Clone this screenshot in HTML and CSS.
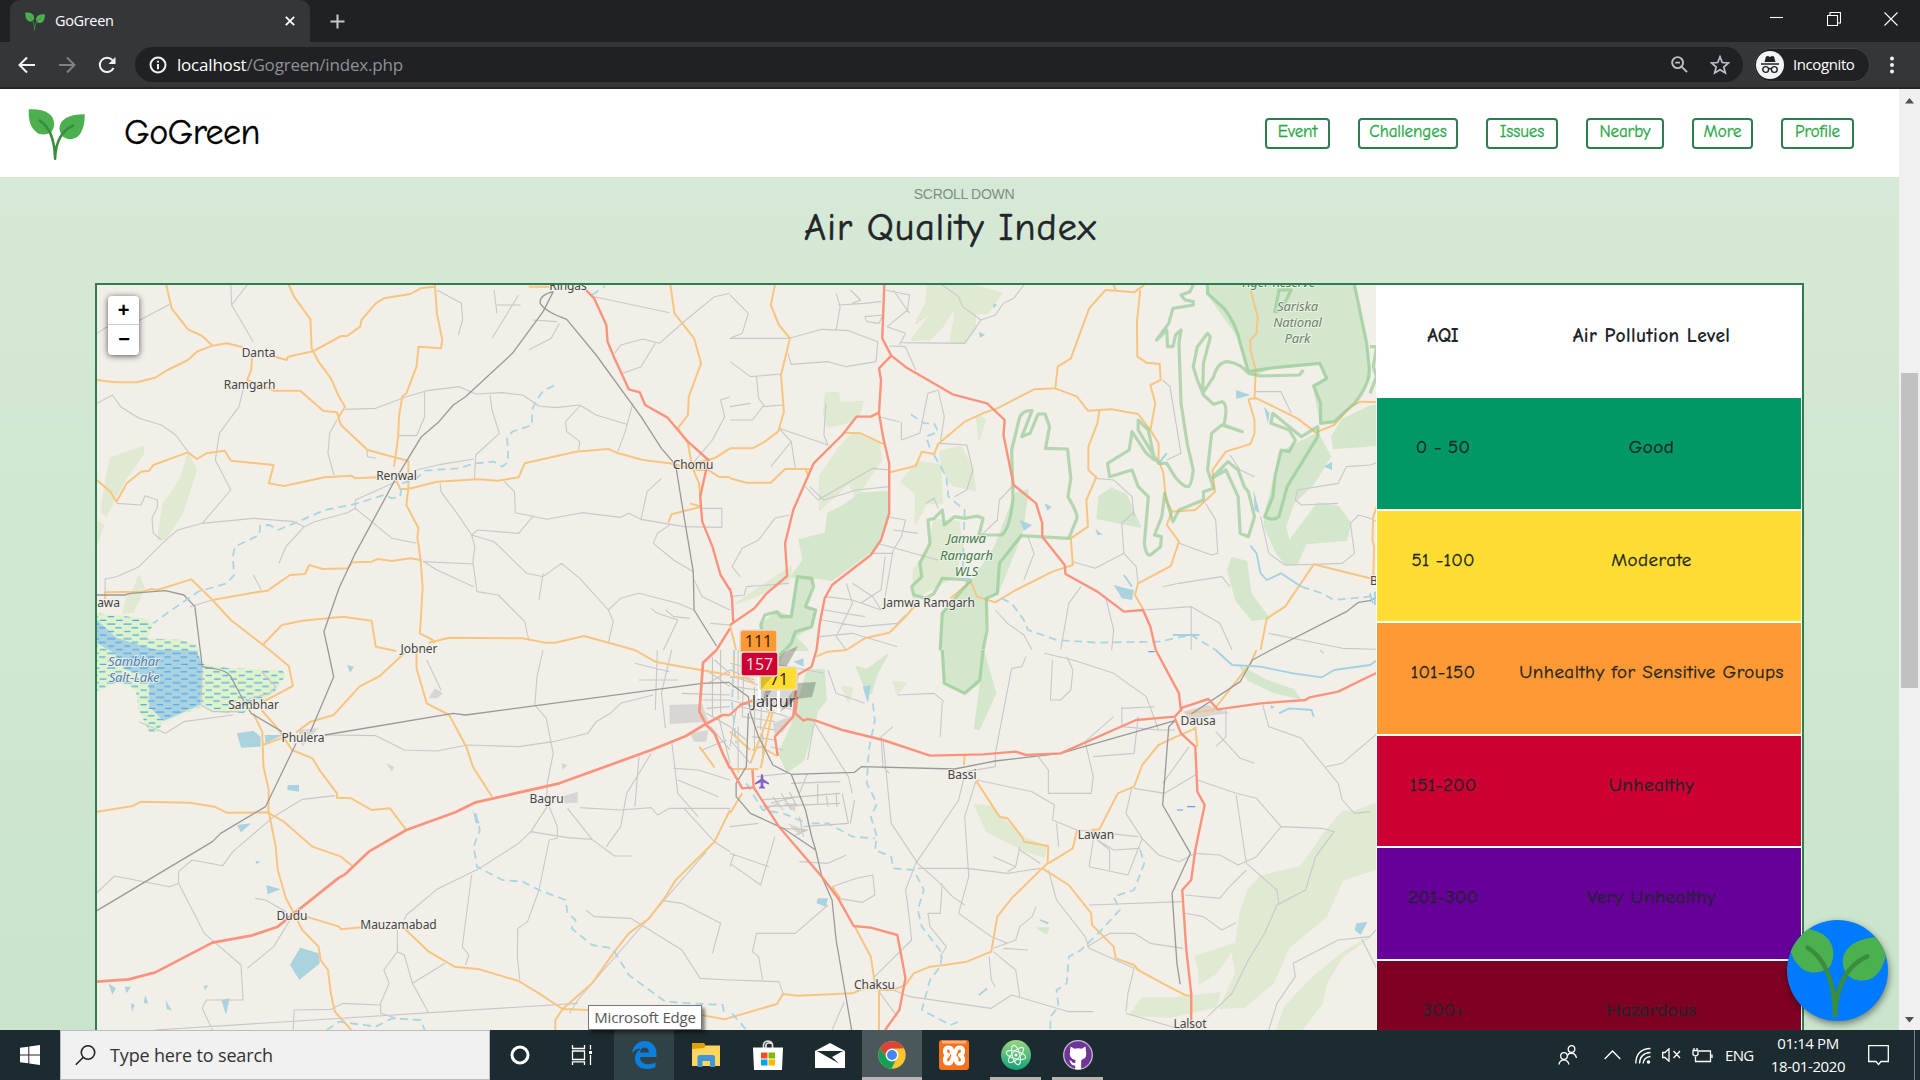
FILE: index.html
```html
<!DOCTYPE html>
<html lang="en">
<head>
<meta charset="utf-8">
<title>GoGreen</title>
<link rel="stylesheet" href="styles.css">
</head>
<body>
<svg class="defs" width="0" height="0">
  <symbol id="sprout" viewBox="27.4 105.4 57 57">
    <path fill="#4caf50" d="M28.2 109.7C45 109 54 115 53.5 125Q53.5 129 51 132.5C46 136 38 136 34.5 131.5C28.5 126 27.8 117 28.2 109.7Z"/>
    <path fill="#4caf50" d="M84 114.7C68 114.5 59 120 58.8 129Q59 133 61.5 136.5C66 141 75 141 79.5 134.5C83.5 128 84.3 121 84 114.7Z"/>
    <path fill="none" stroke="#388e3c" stroke-width="2.6" stroke-linecap="round" d="M39 121C49 127 54 140 54.5 159M72.6 126C61 131 55 143 54.5 159"/>
  </symbol>
</svg>

<div class="tabs">
  <div class="tab"><svg class="favicon"><use href="#sprout"/></svg><span>GoGreen</span>
    <svg class="tab-x" viewBox="0 0 10 10"><path d="M.8.8 9.2 9.2M9.2.8.8 9.2"/></svg></div>
  <svg class="plus" viewBox="0 0 16 16"><path d="M8 .5V15.5M.5 8H15.5"/></svg>
  <div class="window-buttons">
    <svg width="14" height="14"><path d="M0 5.5H13"/></svg>
    <svg width="14" height="14"><path d="M.5 3.5H10.500V13.500H.5ZM3 3V.5H13.500V11H11"/></svg>
    <svg width="14" height="14"><path d="M.5.5 13.500 13.500M13.500.5.5 13.500"/></svg>
  </div>
</div>

<div class="toolbar">
  <svg class="back" viewBox="0 0 18 18"><path d="M17 9H2M9 1.500 1.500 9 9 16.500"/></svg>
  <svg class="forward" viewBox="0 0 18 18"><path d="M1 9H16M9 1.500 16.500 9 9 16.500"/></svg>
  <svg class="reload" viewBox="0 0 18 18"><path d="M15.500 12A7.200 7.200 0 1 1 14.500 4.200"/><path class="solid" d="M17.500 1V8H10.500Z"/></svg>
  <div class="omnibox">
    <svg class="info" viewBox="0 0 18 18"><circle cx="9" cy="9" r="7.500"/><path d="M9 8V13.200M9 4.800V6.600"/></svg>
    <span class="url"><b>localhost</b>/Gogreen/index.php</span>
    <svg class="magnifier" viewBox="0 0 18 18"><circle cx="7" cy="7" r="5.800"/><path d="M11.500 11.500 17 17M4.500 7H9.500"/></svg>
    <svg class="star" viewBox="0 0 20 20"><path d="M10 1.800 12.300 7.500 18.500 8 13.800 12 15.300 18 10 14.700 4.700 18 6.200 12 1.500 8 7.700 7.500Z"/></svg>
  </div>
  <div class="incognito">
    <svg width="28" height="28" viewBox="0 0 28 28"><circle cx="14" cy="14" r="14" fill="#f1f3f4"/><path fill="#202124" d="M10 5.500 12 5 14 6 16 5 18 5.500 19.500 11H8.500ZM5 12.200H23V13.700H5Z"/><g fill="none" stroke="#202124" stroke-width="1.400"><circle cx="9.700" cy="18.500" r="2.900"/><circle cx="18.300" cy="18.500" r="2.900"/><path d="M12.600 18Q14 17 15.400 18"/></g></svg>
    <span>Incognito</span>
  </div>
  <svg class="dots" viewBox="0 0 4 18"><circle cx="2" cy="2.500" r="2"/><circle cx="2" cy="9" r="2"/><circle cx="2" cy="15.500" r="2"/></svg>
</div>

<div class="viewport">
  <div class="page">
    <header class="site-header">
      <svg class="logo"><use href="#sprout"/></svg>
      <h1>GoGreen</h1>
      <nav>
        <a class="n1">Event</a><a class="n2">Challenges</a><a class="n3">Issues</a><a class="n4">Nearby</a><a class="n5">More</a><a class="n6">Profile</a>
      </nav>
    </header>
    <div class="scroll-hint">SCROLL DOWN</div>
    <h2>Air Quality Index</h2>
    <section class="aqi">
      <div class="map">
        <svg class="tiles" viewBox="97 285 1280 745">
          <defs>
            <pattern id="marsh" width="40" height="44" patternUnits="userSpaceOnUse">
              <path d="M2 6H22M22 17H38M4 28H19M24 39H40" stroke="#4ea5f2" stroke-width="3.400"/>
            </pattern>
          </defs>
          <g transform="translate(90 270) scale(.408163 .333333)">
            <!-- north west -->
            <g>
              <path class="wood" d="M50 565 130 530 130 550 85 630 40 735 30 730 30 700ZM240 553 260 600 225 730 185 805 167 808 180 700 200 670 225 620ZM17 755 33 765 17 820M120 920 133 955 105 1025 82 1028 90 985 105 965Z"/>
              <path class="wet" d="M17 1030 130 1045 155 1060 140 1105 225 1110 262 1125 270 1180 340 1195 470 1200 480 1215 450 1270 375 1330 300 1325 275 1310 180 1355 165 1387 145 1385 120 1320 112 1260 90 1245 60 1240 17 1265Z"/>
              <path class="water" d="M17 1050 65 1103 155 1138 262 1142 275 1185 270 1305 180 1353 145 1310 145 1220 90 1200 60 1150 17 1120Z"/>
              <path fill="url(#marsh)" d="M17 1030 130 1045 155 1060 140 1105 225 1110 262 1125 270 1180 340 1195 470 1200 480 1215 450 1270 375 1330 300 1325 275 1310 180 1355 165 1387 145 1385 120 1320 112 1260 90 1245 60 1240 17 1265Z"/>
              <path class="lane" d="M345 45 347 105 400 215M385 45 347 105M17 190 40 172 100 165 195 103M17 400 55 375 75 410 120 445 175 465 210 495 240 545M375 360 365 410 317 490 307 570 345 660 275 760 215 780 190 805 120 890 65 920 37 927V967M275 760 400 745 500 755 525 770 480 830 463 880M525 770 550 755 630 728 650 715 740 805 800 820M65 700 125 705 135 677 165 690 165 712 152 745 155 790 175 810M605 450 587 490 583 550 598 615M625 418 700 415 775 380 825 362 905 350 945 372 1010 368 1060 375 1100 408 1140 413 1200 405 1240 435 1315 463M980 375 985 420 1003 490 945 555 942 625M1200 408 1165 455 1168 485 1200 515 1197 540M1330 400 1310 490 1293 545M858 640 860 665 905 740 935 795 943 830 938 875 948 965 1000 975 1065 1055 1075 1110M935 795 990 815 1070 910 1110 920 1155 880 1200 925 1270 1020 1282 1055 1270 1118M1270 1020 1300 985 1345 970 1440 1000 1480 1020M1015 635 1040 665 1042 728 1120 748 1205 728 1300 742 1320 730 1350 748 1455 770 1548 772V715H1500M820 362V440L800 497H757M850 60 910 100 913 150 902 195M1050 75 985 205M990 60 997 130M997 105H1055M1150 160 1130 205 1075 240M1085 150 1145 155M1235 80 1420 128M1530 80 1460 150 1395 220 1355 207 1300 225 1285 250M1568 70 1530 80M1385 220 1350 290 1305 310M1568 380 1545 390 1555 440 1525 510 1470 590M1400 625 1365 665 1350 748M820 877 850 900 940 950M815 875 940 882M1110 910 1100 990M678 540 680 560 700 565M800 600 860 583 940 567M750 635 650 690V718M935 795 950 780 1050 790 1085 740M1380 820 1390 790 1420 765M1380 820 1430 870 1478 905M1480 930 1500 980 1568 1020M1375 1015 1390 1030 1440 1050 1405 1140M1470 1045 1430 1040 1410 1020M1520 1060 1568 1065M400 915 420 960M245 1010 300 990"/>
              <path class="road" d="M187 45 200 115 240 178 275 198 300 227 335 220 375 232M17 330 60 337 115 337 160 323 190 300 240 270 262 245 300 227M487 45 500 80 540 148 543 235 560 275 590 325 610 380 625 410 608 443 615 465 680 540 750 563 780 572V655L775 705 805 775 802 800 810 870 815 950 810 1060 808 1090 840 1110 845 1120M453 260 482 270 485 260 548 243 615 198 630 198 662 170 665 150 700 100 720 85 785 72 810 55 845 50M845 45 850 130 863 210 860 235 805 230 800 290 775 370 765 380 757 440 755 500 745 590M397 260 395 300 385 330 450 362 515 362 572 423 605 427 615 465M17 630 50 665 65 695 90 640 125 605 145 602 155 585 240 547 262 567 285 550 330 542 345 572 450 585 438 640 475 648 575 622 640 617 650 625 705 622M750 630 760 657 780 657 850 635 950 628 1000 632 1050 622 1065 580 1190 545 1270 537 1290 548 1355 570 1420 580 1490 600 1515 600 1540 620 1568 622M1480 580 1530 565 1568 535M1422 45 1432 130 1480 205 1497 280 1467 380 1465 435 1440 475 1465 520 1475 590 1492 640 1497 710 1470 700M1497 710 1425 733 1417 757M37 987V967L130 965 150 957 165 960 248 928 300 990 345 1050 440 1140M300 990 415 965 435 962 490 915 527 912 537 885 570 897 632 895 642 877 690 875 705 867 740 873 785 865 810 870M423 1125 470 1065 520 1052 620 1040 690 1052 700 1130 750 1143M830 1118 880 1103 1060 1105 1115 1118 1140 1118 1210 1098 1335 1140M1075 50 1125 50"/>
              <path class="rail" d="M1135 65 1110 125 1035 250 920 380 890 405 855 455 812 500 745 635 650 850 610 955 573 1085 583 1140M1135 65Q1100 75 1103 100 1115 125 1168 148L1240 255 1350 440 1400 535 1435 585 1450 700 1478 905 1480 1020 1535 1128M17 975H85L100 970 185 962 230 975 257 1010 270 1140"/>
              <path class="river" d="M1137 347 1110 362 1090 400 1083 420V465L1035 485 1022 505 1025 575 1010 590 990 575 945 580 900 595 820 602 800 625 765 640 760 680 740 685 720 675 650 702 575 720 500 760 460 780 440 765 417 767 415 795 355 830 350 860 353 915 335 940 265 965 200 1020 155 1060M1230 75 1262 48"/>
              <path class="trunk" d="M1215 60 1235 85 1265 165 1268 215 1285 265 1320 358 1347 367 1360 405 1415 443 1465 515 1515 570 1495 680 1500 755 1525 830 1545 915 1568 960M1568 1075 1535 1140"/>
            </g>
            <!-- north east -->
            <g transform="translate(1568 0)">
              <path class="wood" d="M485 45H590L665 70 630 130 600 130V180L575 218 540 215 545 180 555 105 520 170 490 208 445 210 500 120 455 160 480 100ZM235 370 265 368 270 400 325 395 315 440 280 460 240 470 230 430ZM300 490 365 520 370 570 310 680 290 640 220 720 220 620 270 530ZM515 545 565 530 595 600 600 660 545 645 520 600ZM460 575 515 585 520 700 480 700 455 760 455 670 420 635ZM605 435 625 450 610 510ZM500 750 560 755 570 830 550 920 450 985 450 900 490 830ZM15 1000 150 890 145 930 60 980Z"/>
              <path class="park" d="M275 710 320 670 390 665 385 760 350 840 250 930 200 920 150 920 180 870 170 810 235 790 240 730ZM75 1065 115 1025 150 1040 165 920 205 920 185 1010 210 1020 200 1070 160 1100 190 1140H75ZM700 670 730 660 715 790 655 970 630 985 620 1140H515L520 1030 590 940 650 830ZM1170 45H1530L1560 230 1568 320 1530 400 1480 455 1447 460 1430 350 1460 325 1445 280 1320 295 1290 312 1270 305 1245 200 1170 70ZM1586 405 1568 410 1500 450 1475 500 1480 535 1586 525ZM1440 490 1470 560 1430 640 1380 700 1360 770 1370 815 1440 700 1490 710 1520 760 1510 810 1410 820 1390 880 1365 885 1340 850 1310 770 1310 740 1335 620 1350 545ZM935 655 970 675 1005 770 900 745 905 680ZM1230 865 1265 875 1275 970 1320 1045 1280 1050 1240 990 1220 900Z"/>
              <path class="lane" d="M0 75 45 130 30 190 0 205 145 205 225 178 290 182 362 215 358 275 285 290 240 275 150 283 142 250M0 275 50 320 125 312M420 218 575 220 615 150 650 135 670 100 695 85 720 45M520 45 560 80 570 110 615 150M390 228 430 230 455 300M260 70 270 110 260 180M265 105 330 100 370 95M380 60 440 75 435 120 385 170 430 190 415 225M400 60 440 130M330 140 375 135 365 160 335 155ZM295 60 320 90 300 100M510 360 525 440 515 520 580 525 595 600 580 660 550 680M510 360 485 370 465 490 420 510V455M365 440 415 455M235 400 230 495 240 525 120 475 150 515 100 590M150 515 160 595M0 410 50 400M0 450 55 450 80 410 130 405M65 320 70 385 85 410M195 650 230 690 310 660 390 650M185 650 215 690 350 595 390 600M145 735 110 745 70 810 30 835 5 890 25 920M145 940 40 950 35 975 0 980M695 645 660 690 655 750 620 790M385 740 430 750 420 800 400 840 380 980M345 850 400 850M510 870 360 820M730 800 745 850 720 930M840 875 895 895 965 850 960 760 990 725M895 625 940 630 985 680 990 740M965 850 995 890 1000 940M1060 330 1078 350 1105 550 1070 570M1285 365 1350 365 1375 430M1225 555 1250 600 1285 620M1165 700 1190 750 1195 850 1180 855 1100 820M1300 740 1320 850 1360 885 1430 883M1060 950 1100 940 1205 920 1225 950M860 950 830 1000 810 1140M920 980 940 1080 935 1140M1586 577 1568 585 1510 590 1490 640 1390 660 1385 690 1400 705 1490 700M1586 755 1568 745 1540 735 1520 760 1530 850 1500 880 1430 883M650 1020 680 1060 720 1095 740 1140M1130 1010V1140M1015 1020 1130 1010 1200 1060 1230 1140M1320 1090 1500 1135 1584 1138M285 940 300 1000 260 1100 285 1140M235 980 300 990 370 1020 350 980 300 940M225 1050 320 1070 410 1060 430 1035M230 1020 330 1040M220 1100 300 1090 410 1130M320 1000 370 960 380 860M480 700 500 685 510 715M400 780 460 790"/>
              <path class="road" d="M110 45 100 105 120 165 147 205 125 315 132 425 118 485 85 515 55 535 0 535M0 625 40 638 100 638 135 597 195 597M280 488 320 490 378 523M392 607 455 588 470 545 500 552 510 522 575 455 625 427 655 415 745 358 797 355 850 380 877 422 935 418 1000 432 1030 480 1050 520V570L1062 610 1068 690 1083 725 1070 765 1100 815 1080 888 1000 940 992 975 1012 1017M940 45 945 60M797 355 803 290 835 265 880 115 920 60 990 67 1015 45M1005 60 997 155 998 260 1020 278 1053 282 1055 330 1030 345 1042 400 1030 480M905 422 900 460 878 530V600L897 622 873 690 877 770 835 805 840 885 790 905 700 960 650 997 605 980 590 935 540 985M455 1005 430 1040 390 1088 330 1105 285 1140M1275 60 1293 140 1290 190 1275 210 1275 240 1288 300 1285 385M1270 387 1285 450 1285 490 1275 522 1215 545 1182 600 1188 665 1140 720 1083 725M1270 387 1290 385 1390 445 1435 487 1480 465 1520 410 1545 395 1586 396M1586 928 1568 925 1430 883 1360 1010 1315 1045 1300 1140M1586 705 1576 740 1574 810 1578 830 1576 925M185 597 193 620M0 1065 15 1140"/>
              <path class="rail" d="M1586 980 1568 992 1540 997 1510 1025 1325 1140"/>
              <path class="reserve" d="M693 650 690 540 710 440Q720 420 740 422L715 500 735 490 755 432 772 432 783 470 773 535 827 537 835 625 828 680Q852 730 850 745L830 805 713 797 660 880 655 970 628 985 630 1080 620 1140M693 650V690Q685 780 665 795L610 795 620 745 605 738 575 745 550 740 525 765 520 720 500 745 485 750 490 820 465 880 470 920 445 950 450 975 480 985 500 970 520 925 590 930 520 1030 515 1140M75 1065 85 1035 115 1025 125 1040 150 1040 165 920 200 925 205 950 185 1010 210 1020 200 1070 160 1085 150 1120 135 1140M75 1065 80 1085M1170 45V70L1210 115Q1240 160 1250 220L1270 305 1320 295 1445 280 1462 325 1430 348 1447 400 1447 460 1480 455 1530 400Q1570 340 1566 290L1560 220 1530 45M1568 230H1584L1576 290 1584 320 1568 370M1135 45 1127 65 1105 75 1115 90 1135 95 1135 105 1085 115 1075 160 1045 210 1070 180 1072 230 1085 230 1092 195 1105 180 1100 220 1105 400 1120 520 1135 600Q1130 650 1122 650 1110 650 1090 620L1070 580 1050 580 1000 480 1000 450 1025 480 1040 570 1020 550 985 485 978 540 925 580 930 620 985 600 1000 650 1025 680 1015 820Q1020 860 1030 855L1055 830 1057 800 1040 795 1058 740 1065 670 1085 755 1100 720 1160 690 1160 665 1185 655 1170 600 1180 490 1205 465 1255 485 1210 465Q1222 400 1205 395L1185 403 1160 375 1145 330 1135 290 1145 230 1170 190 1177 200 1160 280 1158 370 1185 320Q1195 275 1220 275 1250 280 1270 310L1300 318 1395 315 1405 300M1180 625 1220 575 1245 600 1260 650 1270 665 1285 740 1270 800 1250 790 1245 680 1215 600ZM1310 740Q1330 755 1345 740L1365 650 1440 500V470L1400 500 1330 430 1325 460 1370 480 1385 510 1370 545 1350 540 1335 620 1330 680ZM1335 125 1345 60 1375 60 1350 120Z"/>
              <path class="water" d="M1240 360 1275 375 1240 387ZM710 750 740 765 720 783ZM940 945 970 955 990 960 985 990 960 985ZM1455 590 1475 575V600ZM610 185 625 195 612 203ZM645 100 655 105 645 115ZM770 700 788 710 778 722ZM1308 410 1322 430 1318 460ZM1283 660 1298 730 1285 720ZM895 775 912 795 900 795ZM570 925 590 925 580 940Z"/>
              <path class="river" d="M443 433 475 460 500 460 510 485 480 500 490 535M500 555 530 620 535 680 575 720 570 900M665 985 690 1000 720 1050 730 1080 800 1110 900 1118 1050 1115 1130 1095 1190 1140M1400 950 1450 970 1480 990 1568 980"/>
              <path class="stream" d="M1275 827 1290 850 1300 910 1315 930 1350 910 1400 950M965 915 985 950M1050 580 1070 550M1085 1095 1150 1095M1568 970 1575 1000M1580 965V1005"/>
              <path class="trunk" d="M378 45 373 205 395 257 365 295 370 330 365 430 375 500 390 580V730L370 810 345 855 250 945 232 985 220 1060 212 1140M365 428 345 440 310 440 275 495 205 580 155 720 135 820 140 918 90 970 60 1015 0 1065M395 257 435 295 520 355 545 373 630 400 673 450 670 495 695 645 750 700 765 760V800L820 885 822 912 900 965 965 1025 1012 1020 1030 1070 1043 1140M0 955 5 985 8 1060"/>
            </g>
            <!-- south west -->
            <g transform="translate(0 1140)">
              <path class="town" d="M1420 165 1500 162 1515 215 1420 222ZM1470 250 1515 240 1510 275 1480 275ZM1155 440 1195 425 1195 458 1165 460ZM510 240 560 235 520 290ZM830 145 845 115 865 130 850 145ZM725 340 745 350 740 365ZM1155 340 1170 345 1158 360Z"/>
              <path class="water" d="M515 893 560 910 563 940 513 990 490 945ZM360 250 400 242 418 260V290L370 293ZM428 255 472 255 430 280ZM485 405 512 405V425L483 420ZM360 525 395 520 370 547ZM432 705 467 718 435 733ZM45 1000 63 1015 55 1035ZM85 1010 100 1010 90 1030ZM100 1060 110 1065 103 1085ZM135 1035 143 1060 132 1060ZM185 1050 200 1080 188 1078ZM322 1050 342 1045 333 1095ZM630 45 647 50 637 68ZM405 632 418 635 408 642ZM278 1008 290 1005 282 1020ZM937 480 955 520 945 520Z"/>
              <path class="lane" d="M575 255 700 257 770 300 850 303 925 285 1050 290 1135 275 1220 250 1240 215 1275 190 1300 160 1380 135M1110 0 1095 80 1090 165 1118 205 1125 250 1135 310 1120 400V470L1080 545 1050 580 955 655 850 718 775 795 770 810M1125 470 1145 530V565L1125 570 1100 720 1072 815 1048 835 1047 920 1053 990M935 675 912 890 928 915 920 945M753 838V905L720 960 733 1000 712 1060V1090L750 1105M753 905 770 915 790 1000 870 940M790 1000 830 1090M498 1140 500 1080 590 1078 620 1060 712 1065M217 665V700L280 850 370 945 375 1050 285 1050 275 1075 300 1140M385 955 450 890 490 810M17 728 60 678 195 710 217 700M217 665 250 630 325 647 350 605 450 500 520 448 600 437M1080 545 1170 563 1230 568 1285 618 1328 618M1170 475 1230 568M1200 473 1300 480 1375 473 1390 495 1420 475 1568 475M1345 320 1335 470M1425 270 1440 430 1490 500M1375 310 1315 430 1300 530 1265 590M1455 475 1530 575 1568 605M1510 605 1195 1050 1175 1090M1215 780 1235 800 1325 805 1450 900 1495 985 1568 990M1405 752 1450 760 1545 820 1525 910M120 215 185 250 230 215 350 195M825 30 860 120M1335 40 1420 65M1390 0 1385 180M1425 0 1400 130 1410 235M1345 90 1440 90M1430 355 1490 360 1568 390M1440 390 1540 440M405 745 430 750 480 785M160 1140 1195 1060"/>
              <path class="street" d="M1450 130 1568 135M1500 150H1568M1510 175 1568 170M1525 20V200M1545 0V190M1510 60 1568 110M1515 100 1568 60M1530 30 1568 70M1510 190 1568 230M1520 230 1568 300M1540 200 1568 340M1500 300 1560 270"/>
              <path class="road" d="M440 0 487 48 497 108 425 155M505 248 540 215 597 195 660 110 710 78 770 10M800 10V55L825 160 880 195 922 290 938 350 985 440M400 190 422 245 425 350 438 420 437 480 455 590 460 660 480 745 500 790M420 180 460 235 495 300 545 325 565 365 605 430V443L640 445 690 480 735 475 775 540M17 485 105 468 125 455 245 458 305 470 335 488 435 487 475 515 545 590 615 620 643 648M423 285 475 262M500 790 520 840 560 890 565 930 583 960 590 1030 600 1085 640 1140M530 800 610 830 615 838 665 832M770 835 830 905 893 950 955 958 1050 993 1100 1030 1158 1077 1220 1080M1497 1095 1555 1108 1568 1103M1140 1140V1110L1158 1077 1230 1000 1285 905 1320 850 1370 805 1410 740 1435 690 1530 575 1568 480M1493 290 1530 352M1335 0 1385 35 1450 50 1568 75"/>
              <path class="rail" d="M583 0 597 80 540 245M505 280 430 470 320 550 300 575 17 782M275 50 300 55Q335 60 345 80L375 150 395 190 470 245M270 0 275 50M575 255 890 190 920 195 1500 100 1568 97"/>
              <path class="lane" d="M275 50 272 165 300 185 375 185M380 150 440 130 455 110 420 65"/>
              <path class="river" d="M945 490 955 540 940 590 948 650 1010 690 1060 695 1100 720 1165 750 1170 790 1190 810 1180 835 1230 885 1280 895 1320 975 1365 1015 1410 1055 1470 1060 1550 1065 1555 1100M580 1140 610 1115 700 1130 740 1105 810 1110 820 1140"/>
              <path class="trunk wide" d="M17 995 95 988 160 967 300 878 395 857 460 830 500 790 610 683 625 673 683 605 775 540 895 487 945 457 1150 400 1375 300 1460 258 1500 228 1550 195 1568 195M1535 0 1502 38 1493 185 1510 225 1530 250 1550 310 1568 355"/>
            </g>
            <!-- south east -->
            <g transform="translate(1568 1140)">
              <path class="wood" d="M600 465 640 470 680 520 715 560 775 590 770 620 720 600 630 545ZM1500 485H1530L1586 460V655L1500 690 1460 800 1370 890 1330 1000 1260 1070 1200 1075 1240 970 1230 900 1190 970 1150 1000 1150 960 1140 920 1240 880 1250 790 1270 720 1300 680 1400 650 1450 560ZM1568 860 1500 920 1460 1000 1450 1060 1400 1140H1340L1360 1070 1430 980 1500 910ZM1010 1045 1090 1045 1200 1030 1190 1070 1080 1100 980 1095ZM275 110 300 115 290 155ZM400 95 430 100 410 130Z"/>
              <path class="park" d="M190 60 230 60 235 150 215 180 180 330 140 365 120 310 150 230 160 190ZM520 0H620L650 130 610 238 600 235 615 95 575 130 525 100ZM310 50 335 60 385 15 360 70 345 130 330 110ZM1250 50 1310 90 1380 120 1395 145 1330 125 1270 90ZM755 835 780 835 775 850ZM75 0H135L115 50 75 50Z"/>
              <path class="town" d="M1110 185 1170 165 1225 190 1185 195 1130 210ZM105 220 155 195 130 245 110 255ZM85 110 150 110 150 180 60 160ZM130 460 160 460 160 485ZM140 520 185 540 170 555Z"/>
              <path class="lane" d="M725 20 715 50 690 55 650 310V350L580 365M770 10 840 30 940 70 1020 140 1050 240 1090 240M790 30 785 150 810 150 835 120 840 60 825 20M575 375 560 450 500 560 455 640 430 720 435 760 445 870 350 985M602 395 575 500 585 680 560 790 640 860 680 880M605 390 740 425 795 465 790 510 850 540 1000 560M755 320 780 360V430L885 430 890 380 870 275 940 200M460 655 580 655 680 670 760 655M375 270 395 520 460 640 515 700 545 740 575 765M265 745 325 757 355 735 350 675 310 685 250 710M1305 165 1320 230 1400 265 1490 400 1500 450 1530 490 1568 485M1145 390 1240 430 1290 445 1350 530 1450 535 1480 545 1435 620 1410 720 1340 765 1310 850 1270 930 1230 1030 1170 1100M1240 435 1265 640 1340 720 1345 765M1140 610 1200 615 1245 645 1290 620 1350 530M1265 660 1220 715 1200 745 1115 735M1005 560 1050 615 1100 635 1140 610M985 410 970 490 1010 565M900 570 930 600V660M890 570 880 650 975 675 1010 565M900 570 940 600 1005 595M880 765 1110 755M875 890 930 850 990 850 1030 880 1110 895M780 660 800 750 870 860 880 895 990 955 975 1030 970 1085M390 1015 440 1040 640 1075 690 1035 830 1085 890 1085M970 1090 1110 1140M0 990 120 995 130 1030M240 765 160 850 65 850 55 905 70 920 80 990M0 610 95 650M0 640 75 705 110 560M365 1025 410 1100M280 1055 250 1140M1586 835 1568 860 1490 870 1380 940 1385 980 1340 1060 1320 1140M1545 860 1586 960M205 215 290 380 300 430M205 225 190 330M1115 790 1160 800 1205 840 1240 818M1190 245 1250 325 1285 340M1215 180V260L1190 290M635 920 640 990 650 1010M645 905 700 960 710 1040M670 895 730 900M750 770 740 800 710 830 700 870 645 895M710 590 700 650 680 665M645 620 700 650M710 600 760 640M520 700 515 790 485 790 490 830 530 890 515 920M400 230 370 260 375 350 390 370M240 60 260 130 330 160M410 135 500 130 525 155M520 155 515 260M800 520 805 590M960 170V230L1050 240M1040 170 960 175M1000 200 990 310 890 320M0 530 70 520M0 650 10 610M1460 350 1500 340 1586 250M1445 0 1455 10M100 40 230 70M1125 290 1060 400M1140 375 1065 430 990 415M170 635 240 640 285 615"/>
              <path class="street" d="M75 450 270 430M80 470 270 460M150 400 270 395M215 395V460M235 430 240 470M260 430 262 470M180 530 290 520M100 460 160 440M105 440 130 480M125 430 150 480M145 425 165 470M80 480 120 460M130 535 190 540 160 555M170 500 180 560M275 430 290 520M305 450 295 520M190 370 170 430M10 80 80 110 90 180M0 40 70 60 75 130M20 0V150M35 20 30 200M5 110 100 125M0 60 60 90M0 150 60 170M20 170 110 190M60 110V300M80 90 75 240M15 180 0 290M90 180 140 200M0 230 40 270M30 200 110 215M65 230 110 240M20 230V370M55 260 110 270M0 270 50 340M80 250V340M65 380 140 370M100 290 130 300"/>
              <path class="road" d="M575 315 573 345M603 392 660 500 680 505 715 560 720 575 780 588 778 640 765 655 690 745 655 800 640 905 580 935 525 945 490 950 450 970 430 1005 400 1020H365V1140M780 640 840 595 850 540M885 540 905 538 950 430 990 410 1010 345 1050 285 1090 262 1140 235M765 655 830 705 885 790 887 825 940 890 945 925 990 945 1000 960 1060 1000 1115 1035 1130 1037M305 828 345 920 355 1000 300 1030 165 1037 130 1032 115 1062 0 1103M250 710 270 745M1120 190 1185 180 1275 40 1290 0M210 20 240 5 285 0M50 340 100 180M75 355 105 180M0 357H70M0 245 50 300M55 300 75 290 115 318M0 490 30 430M0 80 40 85 60 100M10 0V80M1140 230 1145 290"/>
              <path class="rail" d="M150 373 305 367 322 350 550 357 650 333 810 310 1090 212M1130 192 1250 95 1280 30 1325 0M1090 212 1075 230 1060 465 1128 610 1083 730 1095 940 1103 1003M0 100 45 140 50 190 70 260 105 345 150 373 185 480 200 560 210 600M130 535 210 600 225 680 250 750 260 870 298 1140M130 535 50 490 15 440 15 400 40 350 45 190"/>
              <path class="reserve" d="M520 0 525 100 575 130 612 90 620 0M135 0 100 40"/>
              <path class="water" d="M1535 820 1562 815 1545 855 1530 840ZM215 745 240 745 235 770 212 760ZM155 35 180 25V50ZM325 110 345 105 338 160ZM1325 165 1335 170 1325 178Z"/>
              <path class="river" d="M350 160 355 210 340 300 335 400 360 460 345 500 360 560 355 600 395 620 400 655 450 660 475 720 460 780 470 830 520 910 515 950 490 990 470 1080 540 1125M200 520 240 520 300 560 355 565M1005 600 1015 640 990 720 940 740 955 780 910 840 860 900 830 920 825 1000 800 1020 805 1070 785 1100V1140M5 1090 40 1140M40 400 80 480 130 490 190 520M10 0 5 160 15 280M540 1125 560 1115"/>
              <path class="stream" d="M1190 0 1230 45 1300 50 1380 70 1450 82 1480 60 1568 45 1586 30M1345 190 1370 175 1425 180 1430 200M610 1035 630 1015M760 810 780 820"/>
              <path d="M1120 470H1140M1095 480H1110M1025 5H1040" stroke="#4ea5f2" stroke-width="1.200"/>
              <path class="trunk" d="M1043 0 1100 130 1105 185M1586 68 1568 78 1490 125 1420 142 1410 150 1300 160 1195 178 1172 147 1110 172 1090 200 995 210 810 310 725 315 700 305 620 313 490 317 375 270 275 240 210 212 190 207 180 212 160 190 165 140M212 0 200 50 165 75 155 200 110 260 117 318M0 350 30 415 58 412 55 360M58 412 120 530 225 680 265 745 303 828 345 833 410 855 430 985 415 1080 380 1140M1090 205 1105 250 1140 290 1145 425 1163 465 1150 540 1140 600 1130 690 1108 720 1118 900 1130 1030V1130M0 195 25 165 60 150"/>
            </g>
          </g>
          <path fill="#8461c4" d="M762 773.500Q763.500 775 763.300 779L769 783V784.500L763.300 782.500V786L765 787.500V788.500H759V787.500L760.700 786V782.500L755 784.500V783L760.700 779Q760.500 775 762 773.500Z"/>
          <g class="places">
            <text x="568" y="290">Ringas</text><text x="258.500" y="356.500">Danta</text><text x="249.500" y="389">Ramgarh</text><text x="396.500" y="480">Renwal</text><text x="693" y="468.500">Chomu</text><text x="419" y="653">Jobner</text><text x="104" y="607">Nawa</text><text x="253.500" y="709">Sambhar</text><text x="303" y="741.500">Phulera</text><text x="546.500" y="803">Bagru</text><text x="292" y="920">Dudu</text><text x="398.500" y="928.500">Mauzamabad</text><text x="929" y="607">Jamwa Ramgarh</text><text x="962" y="779">Bassi</text><text x="1198" y="725">Dausa</text><text x="1096" y="838.500">Lawan</text><text x="874.500" y="989">Chaksu</text><text x="1190" y="1027.500">Lalsot</text><text x="1388" y="585">Baswa</text>
            <text class="city" x="773.500" y="706.500">Jaipur</text>
            <g class="lake"><text x="134" y="665.500">Sambhar</text><text x="134" y="681.500">Salt-Lake</text></g>
            <g class="nature"><text x="966.500" y="543">Jamwa</text><text x="966.500" y="559.500">Ramgarh</text><text x="966.500" y="575.500">WLS</text><text x="1278" y="287">Tiger Reserve</text></g>
            <g class="nature pale"><text x="1297.500" y="310.500">Sariska</text><text x="1297.500" y="327">National</text><text x="1297.500" y="343">Park</text></g>
          </g>
          <g class="pins">
            <path fill="#000" opacity=".22" d="M762 706 788 664 798 646 785 652 770 666ZM780 712 797 699 812 697 816 682 797 683Z"/>
            <path stroke="#fff" stroke-width="3" d="M759.500 676V699M778.500 690V713"/>
            <g><rect x="740" y="630" width="37" height="23" rx="2.500" fill="#f93"/><text x="758.500" y="647">111</text></g>
            <g><rect x="760" y="667" width="37" height="23" rx="2.500" fill="#fd3"/><path d="M779 668 761 690 761 668Z" fill="#000" opacity=".15" stroke="none"/><text x="779" y="684.500">71</text></g>
            <g><rect x="741" y="652" width="37" height="24" rx="2.500" fill="#c03"/><text class="light" x="759.500" y="669.500">157</text></g>
          </g>
        </svg>
        <div class="zoom-control"><span>+</span><span>−</span></div>
      </div>
      <div class="scale">
        <div class="row head"><span>AQI</span><span>Air Pollution Level</span></div>
        <div class="row good"><span>0 - 50</span><span>Good</span></div>
        <div class="row moderate"><span>51 -100</span><span>Moderate</span></div>
        <div class="row sensitive"><span>101-150</span><span>Unhealthy for Sensitive Groups</span></div>
        <div class="row unhealthy"><span>151-200</span><span>Unhealthy</span></div>
        <div class="row very"><span>201-300</span><span>Very Unhealthy</span></div>
        <div class="row hazardous"><span>300+</span><span>Hazardous</span></div>
      </div>
    </section>
    <div class="fab"><svg><use href="#sprout"/></svg></div>
  </div>
  <div class="scrollbar">
    <svg width="9" height="6"><path d="M4.500 0 9 5.500H0Z"/></svg>
    <div class="thumb"></div>
    <svg width="9" height="6"><path d="M0 0H9L4.500 5.500Z"/></svg>
  </div>
</div>

<div class="taskbar">
  <div class="start"><svg width="20" height="20"><path fill="#fff" d="M0 2.800 8.300 1.700V9.500H0ZM9.300 1.500 20 0V9.500H9.300ZM0 10.500H8.300V18.300L0 17.200ZM9.300 10.500H20V20L9.300 18.500Z"/></svg></div>
  <div class="search"><svg width="21" height="21"><circle cx="13" cy="7.500" r="6.700"/><path d="M8.300 12.300.8 19.800"/></svg><span>Type here to search</span></div>
  <div class="tile"><svg width="20" height="20"><circle cx="10" cy="10" r="8" fill="none" stroke="#fff" stroke-width="3"/></svg></div>
  <div class="tile"><svg width="22" height="20"><path fill="none" stroke="#fff" stroke-width="1.300" d="M1.500 0V3.500H13.500V0M1.500 6H13.500V14.500H1.500ZM1.500 20V16.800H13.500V20M19.500 0V4.500M19.500 10V20"/><path fill="#fff" d="M18 6H21V9H18Z"/></svg></div>
  <div class="tile hover"><svg width="26" height="28" viewBox="0 0 26 28"><path fill="#0a7fdc" d="M1 12C2 4 8 0 13.500 0 21 0 26 6 25.500 13V16H9C9 21 13 23.300 17 23.300 20 23.300 22.500 22.500 24.500 21.300V26C22 27.400 19 28 16 28 8 28 3.500 23 4 17 4.300 12.500 7 9 11 7.500 6 7.500 3 9.500 1 12ZM9 11.500H18C18 8.500 16.500 6.500 13.500 6.500 11 6.500 9.300 8.500 9 11.500Z"/></svg></div>
  <div class="tile"><svg width="28" height="24"><path fill="#e0a100" d="M0 0H12L14 3V8H0Z"/><path fill="#ffd75e" d="M0 6 12 5 14 2.500H28V23H0Z"/><path fill="#3f96dd" d="M5.500 24V14.500Q5.500 12 8 12H20.500Q23 12 23 14.500V24H18V18H10.500V24Z"/></svg></div>
  <div class="tile"><svg width="30" height="30"><path fill="none" stroke="#ddd" stroke-width="1.700" d="M10.500 8V5Q10.500 1.500 15 1 19.500 1.500 19.500 5V8M13 8V4.500Q15 1.500 19.500 4"/><path fill="#fff" d="M0 7.500H30L29 30H1Z"/><path fill="#f25022" d="M8 12.500H14.500V18.500H8Z"/><path fill="#7fba00" d="M15.500 12.500H22V18.500H15.500Z"/><path fill="#00a4ef" d="M8 19.500H14.500V25.500H8Z"/><path fill="#ffb900" d="M15.500 19.500H22V25.500H15.500Z"/></svg></div>
  <div class="tile"><svg width="30" height="25"><path fill="#fff" d="M15 0 30 8V25H0V8Z"/><path fill="#1b2b30" d="M2 8H28L17 14 24 20.500Z"/></svg></div>
  <div class="tile active"><svg width="28" height="28" viewBox="-14 -14 28 28"><circle r="13.700" fill="#fbc52f"/><path fill="#db4437" d="M-11.900-6.800A13.700 13.700 0 0 1 11.900-6.800L0-6.300-5.400 3.100Z"/><path fill="#139f57" d="M-11.900-6.800-5.400 3.100Q-2 7 3.500 5.500L-.5 13.700A13.700 13.700 0 0 1-11.900-6.800Z"/><circle r="6.400" fill="#fff"/><circle r="5" fill="#4285f4"/></svg></div>
  <div class="tile"><svg width="30" height="30" viewBox="0 0 30 30"><rect width="30" height="30" rx="3" fill="#f4721e"/><path fill="#fbb285" d="M3 1H27V3.500H3Z"/><path fill="none" stroke="#fff" stroke-width="4.200" stroke-linecap="round" stroke-linejoin="round" d="M13 11.500Q13 7.500 9.500 7.500 6 7.500 6 11 6 14.500 9 15 6 16.500 6 20 6 23.500 9.500 23.500 12.500 23.500 13 19.500L17 10.500Q17.500 7.500 20.500 7.500 24 7.500 24 11 24 14.500 21 15 24 16.500 24 20 24 23.500 20.500 23.500 17 23.500 17 19.500M12.500 12 17.500 19"/></svg></div>
  <div class="tile open"><svg width="30" height="30" viewBox="-15 -15 30 30"><linearGradient id="atom" x2="0" y2="1"><stop stop-color="#9bd580"/><stop offset="1" stop-color="#0fa37a"/></linearGradient><circle r="15" fill="url(#atom)"/><g fill="none" stroke="#e3f6e5" stroke-width="1.200"><ellipse rx="10" ry="3.800" transform="rotate(75)"/><ellipse rx="10" ry="3.800" transform="rotate(15)"/><ellipse rx="10" ry="3.800" transform="rotate(-45)"/></g><circle r="1.600" fill="#fff"/></svg></div>
  <div class="tile open"><svg width="30" height="30" viewBox="-15 -15 30 30"><circle r="14.300" fill="#6e3694" stroke="#cbb9da" stroke-width="1.300"/><path fill="#fff" d="M-7.500-8.500-3.500-6.300Q0-7.300 3.500-6.300L7.500-8.500 8-3.500Q9.500 3 4 4.500 2.800 5.500 3.200 7V14.300H-2.800V10.500Q-6.500 11-7.500 7.500L-9 5.500Q-6.500 5-5.500 7.500L-2.800 8.300-2.500 5Q-9.500 3.500-8-3.500Z"/></svg></div>
  <div class="tray">
    <svg class="people" width="20" height="20"><circle cx="13.500" cy="4" r="3.300"/><circle cx="6" cy="11" r="3.300"/><path d="M9.500 10.500Q10.500 8 13.500 8 17.500 8.500 18.500 13M.8 19.500Q2 14.800 6 14.800 10 15 11 19.500"/></svg>
    <svg class="chev" width="17" height="10"><path d="M.7 9 8.500 1 16.300 9"/></svg>
    <svg class="wifi" width="16" height="17"><path d="M.8 16.500Q1 2 15.500 1.500M4.500 16.500Q5 6 15.500 5.500M8 16.500Q9 10 15.500 9.500"/><circle cx="13.500" cy="15" r="1.800" fill="#fff" stroke="none"/></svg>
    <svg class="mute" width="19" height="14"><path d="M.7 4.500H3L7 .8V13.200L3 9.500H.7ZM11.500 3 18 10M18 3 11.500 10"/></svg>
    <svg class="battery" width="21" height="15"><path d="M7 3H18.500V13.500H3.500V9M20 6.500V10M1 2.500H6V6.500Q3.500 9.500 1 6.500ZM2 0V2.500M5 0V2.500"/></svg>
    <span class="lang">ENG</span>
    <span class="clock">01:14 PM<br>18-01-2020</span>
    <svg class="note" width="21" height="21"><path d="M.7.7H20.300V16.500H13L10.500 19.500 8 16.500H.7Z"/></svg>
  </div>
</div>
<div class="tooltip">Microsoft Edge</div>
</body>
</html>
```
FILE: styles.css
```css
* { box-sizing: border-box; }
html, body { margin: 0; height: 100%; }
body {
  width: 1920px; height: 1080px; overflow: hidden; position: relative;
  display: flex; flex-direction: column;
  font-family: "Open Sans", "Noto Sans", sans-serif; color: #212529;
}
svg { display: block; flex: none; }
.defs { position: absolute; }

/* browser frame */
.tabs { height: 42px; background: #202124; display: flex; align-items: center; padding-left: 10px; }
.tab { width: 300px; height: 42px; background: #35363a; border-radius: 10px 10px 0 0; display: flex; align-items: center; padding: 0 15px; color: #fff; font-size: 14.5px; letter-spacing: -.35px; }
.tab span { margin-top: -2px; }
.favicon { width: 20px; height: 20px; margin-right: 10px; }
.tab-x { width: 10px; height: 10px; margin-left: auto; }
.tab-x path, .plus path { stroke: #fff; stroke-width: 1.8; }
.plus { width: 15px; height: 15px; margin-left: 20px; }
.plus path { stroke: #c6c7ca; stroke-width: 2.2; }
.window-buttons { margin-left: auto; display: flex; gap: 43px; padding: 0 22px 5px 0; }
.window-buttons path { fill: none; stroke: #fff; stroke-width: 1.1; }

.toolbar { height: 47px; background: #35363a; border-bottom: 2px solid #242528; display: flex; align-items: center; padding-left: 18px; }
.toolbar svg { fill: none; stroke: #f1f3f4; stroke-width: 2; }
.back, .forward, .reload { width: 18px; height: 18px; }
.toolbar .forward { stroke: #808184; margin-left: 22px; }
.reload { margin-left: 22px; }
.reload .solid { fill: #f1f3f4; stroke: none; }
.omnibox { width: 1608px; height: 35px; margin-left: 19px; border-radius: 18px; background: #202124; display: flex; align-items: center; padding: 0 13px 0 14px; }
.info { width: 18px; height: 18px; }
.url { margin-left: 10px; font-size: 17px; letter-spacing: -.2px; color: #8e9195; }
.url b { font-weight: 400; color: #fff; }
.toolbar .magnifier { width: 17px; height: 17px; margin-left: auto; stroke: #bdc1c6; }
.toolbar .star { width: 20px; height: 20px; margin-left: 22px; stroke: #bdc1c6; stroke-width: 1.7; }
.incognito { width: 116px; height: 34px; margin-left: 11px; border-radius: 17px; border: 1px solid #414246; background: #202124; color: #fff; display: flex; align-items: center; padding-left: 1px; font-size: 15px; letter-spacing: -.4px; }
.incognito svg { stroke: none; }
.incognito span { margin: -2px 0 0 9px; }
.toolbar .dots { width: 4px; height: 18px; margin-left: 20px; fill: #f1f3f4; stroke: none; }

.viewport { height: 941px; display: flex; }
.page { width: 1899px; overflow: hidden; position: relative; background: linear-gradient(#d6e9d6 88px, #cae4cd); }
.scrollbar { width: 21px; background: #f0f0f0; display: flex; flex-direction: column; align-items: center; padding: 9px 0 7px; }
.scrollbar svg { fill: #505050; }
.thumb { width: 17px; height: 315px; margin: 269px 0 auto; background: #c1c1c1; }

/* site; hand-written style face */
.site-header, h2, .row { font-family: "Comic Sans MS", "Comic Neue", "Open Sans", sans-serif; -webkit-text-stroke: .3px currentColor; }
.site-header { height: 88px; background: #fff; display: flex; align-items: flex-start; padding: 16px 45px 0 28px; }
.logo { width: 57px; height: 57px; }
h1 { margin: 5px 0 0 39px; font-size: 36px; line-height: 46px; font-weight: 400; letter-spacing: -.65px; color: #000; }
nav { margin: 13px 0 0 auto; display: flex; gap: 28px; }
nav a { height: 31px; border: 2px solid #2e7d4f; border-radius: 4px; color: #28a745; font-size: 17px; line-height: 24px; text-align: center; letter-spacing: -.1px; }
.n1 { width: 65px; } .n2 { width: 100px; } .n3 { width: 72px; } .n4 { width: 78px; } .n5 { width: 61px; } .n6 { width: 73px; }
.scroll-hint { height: 32px; padding: 7px 0 0 29px; text-align: center; font: 14px/20px "Liberation Sans", sans-serif; letter-spacing: -.3px; color: #7d9082; }
h2 { margin: 0; height: 74px; padding-left: 2px; text-align: center; font-weight: 400; font-size: 38px; line-height: 39px; letter-spacing: 1.05px; -webkit-text-stroke-width: .6px; }

.aqi { width: 1709px; height: 860px; margin-left: 95px; border: 2px solid #2e7d4f; background: #fff; display: flex; }
.map { position: relative; width: 1279px; height: 745px; overflow: hidden; background: #f2efe9; }
.tiles { width: 1280px; height: 745px; }
.tiles path { vector-effect: non-scaling-stroke; fill: none; stroke-linejoin: round; }
.tiles .wood { fill: #e0e9d2; stroke: #e0e9d2; stroke-width: 2; }
.tiles .park { fill: #d4e7cd; stroke: #d4e7cd; stroke-width: 2; }
.tiles .wet { fill: #def3ca; }
.tiles .water { fill: #aad3df; }
.tiles .town { fill: #d8d6d4; }
.tiles path[fill="url(#marsh)"] { fill: url(#marsh); }
.tiles pattern path { vector-effect: none; }
.tiles .lane { stroke: #c8c8ca; stroke-width: 1.1; }
.tiles .street { stroke: #c6c4c4; stroke-width: 1.1; }
.tiles .road { stroke: #f7c580; stroke-width: 2; }
.tiles .trunk { stroke: #f9937c; stroke-width: 2.4; }
.tiles .wide { stroke-width: 2.7; }
.tiles .rail { stroke: #999; stroke-width: 1.3; }
.tiles .river { stroke: #a8d6e4; stroke-width: 1.8; stroke-dasharray: 8 5; }
.tiles .stream { stroke: #a2d2e2; stroke-width: 1.8; }
.tiles .reserve { stroke: #8cc78c; stroke-opacity: .62; stroke-width: 3.2; }
.tiles path[fill="#8461c4"] { fill: #8461c4; }
.tiles path[fill="#000"] { fill: #000; }
.places { font: 12px "Noto Sans", sans-serif; fill: #444; text-anchor: middle; stroke: #f5f2ec; stroke-opacity: .75; stroke-width: 2px; paint-order: stroke; letter-spacing: -.05px; }
.city { font-size: 16px; }
.lake, .nature { font-size: 13px; font-style: italic; fill: #4d80b3; letter-spacing: -.15px; }
.nature { fill: #3c7d4d; }
.pale { fill: #68866a; }
.pins { font: 16px "Noto Sans", sans-serif; text-anchor: middle; }
.pins rect { stroke: #e4ded4; stroke-width: 1.5; }
.pins text { fill: #3a2710; }
.pins .light { fill: #fbd8e0; }
.zoom-control { position: absolute; left: 11px; top: 11px; width: 31px; height: 59px; border-radius: 4px; background: #fff; box-shadow: 0 1px 6px rgba(0,0,0,.65); }
.zoom-control span { display: block; height: 28px; font: bold 20px/28px "Liberation Sans", sans-serif; text-align: center; color: #000; }
.zoom-control span + span { border-top: 1px solid #ccc; padding-left: 1px; }

.scale { width: 426px; padding: 0 1px; }
.row { height: 110.5px; margin-bottom: 2px; display: grid; grid-template-columns: 132px 285px; text-align: center; font-size: 19px; line-height: 99px; letter-spacing: .45px; white-space: nowrap; }
.row span:first-child { letter-spacing: .1px; }
.row.head { height: 111px; font-weight: 700; font-size: 19.5px; line-height: 102px; letter-spacing: .35px; -webkit-text-stroke-width: 0; }
.good { background: #096; } .moderate { background: #fd3; } .sensitive { background: #f93; }
.unhealthy { background: #c03; } .very { background: #609; } .hazardous { background: #7e0023; }

.fab { position: absolute; left: 1787px; top: 831px; width: 101px; height: 101px; border-radius: 50%; background: #007bff; overflow: hidden; box-shadow: 1px 3px 7px rgba(0,0,0,.45); }
.fab svg { width: 101px; height: 101px; }

/* taskbar */
.taskbar { height: 50px; background: #1b2b30; display: flex; color: #fff; }
.start { width: 60px; display: flex; align-items: center; justify-content: center; }
.search { width: 430px; background: #f1f1f1; border: 1px solid #bcbcbc; display: flex; align-items: center; padding-left: 14px; color: #333; font-size: 18px; letter-spacing: -.15px; }
.search svg { fill: none; stroke: #222; stroke-width: 1.6; }
.search span { margin-left: 14px; }
.tile { width: 60.8px; margin-right: 1.2px; display: flex; align-items: center; justify-content: center; position: relative; }
.tile:nth-child(3) { width: 59px; }
.tile:nth-child(4) { width: 63.5px; margin-right: 0; }
.hover { background: #314247; }
.active { background: #4a585b; box-shadow: inset 0 -3px #b7b5b4; }
.open { background: linear-gradient(#b7b5b4, #b7b5b4) center bottom / 51px 3px no-repeat; }
.tray { margin-left: auto; width: 362px; display: flex; align-items: center; font-size: 15.5px; }
.tray svg { fill: none; stroke: #fff; stroke-width: 1.3; }
.chev { margin-left: 26px; }
.wifi { margin-left: 14px; }
.mute { margin-left: 11px; }
.battery { margin-left: 11px; }
.lang { margin-left: 12px; width: 37px; font-size: 15px; letter-spacing: -.7px; }
.clock { width: 92px; text-align: center; line-height: 23px; font-size: 15px; letter-spacing: -.4px; }
.note { margin-left: 14px; }
.tray::after { content: ""; width: 1px; height: 50px; margin-left: 25px; background: #77858a; }
.tooltip { position: absolute; left: 588px; top: 1005px; width: 114px; height: 25px; border: 1px solid #767676; background: #fff; color: #575757; font-size: 15px; line-height: 23px; text-align: center; letter-spacing: -.2px; box-shadow: 3px 3px 3px rgba(0,0,0,.45); }
```
